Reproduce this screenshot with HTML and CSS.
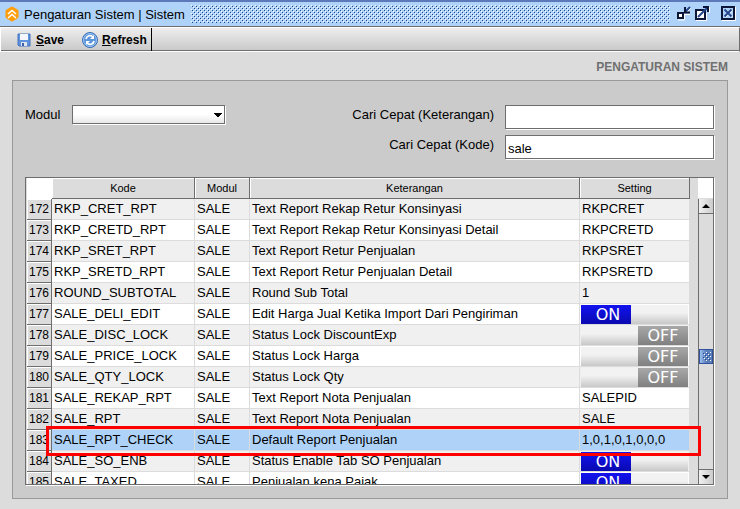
FILE: index.html
```
<!DOCTYPE html>
<html lang="id">
<head>
    <meta charset="UTF-8">
    <meta name="viewport" content="width=device-width, initial-scale=1.0">
    <title>Pengaturan Sistem | Sistem</title>
    <link rel="stylesheet" href="styles.css">
</head>
<body>
    <div class="window">
        <header class="titlebar">
            <svg class="app-icon" width="14" height="16" viewBox="0 0 14 16">
                <path d="M7 2l5 3v6l-5 3-5-3V5z" fill="#ff9d0a" stroke="#ff9d0a" stroke-width="3" stroke-linejoin="round"/>
                <path d="M3 8l4-3.500L11 8M3 12l4-3.500L11 12" fill="none" stroke="#fff" stroke-width="1.600"/>
            </svg>
            <h1>Pengaturan Sistem | Sistem</h1>
            <svg class="grip" aria-hidden="true">
                <defs>
                    <pattern id="dots" width="4" height="4" patternUnits="userSpaceOnUse">
                        <path d="M0 0h1v1H0zM2 2h1v1H2z" fill="#fff"/>
                        <path d="M1 1h1v1H1zM3 3h1v1H3z" fill="#24458c"/>
                    </pattern>
                </defs>
                <rect width="100%" height="100%" fill="url(#dots)"/>
            </svg>
            <div class="window-buttons">
                <button type="button" aria-label="Minimize">
                    <svg width="16" height="16" viewBox="0 0 16 16" fill="none">
                        <path d="M2 15h6.500V8.500M9 9.500h5M15 3l-4 4" stroke="#fff"/>
                        <path d="M2 8h5v5H2z" fill="#fff" stroke="#0c1638" stroke-width="2"/>
                        <path d="M14 2L9 7" stroke="#24458c" stroke-width="2"/>
                        <path d="M9 2v5.500M8 7.500h6" stroke="#0c1638" stroke-width="2"/>
                    </svg>
                </button>
                <button type="button" aria-label="Maximize">
                    <svg width="16" height="16" viewBox="0 0 16 16" fill="none">
                        <path d="M2 15.500h10.500V8M15.500 2v6" stroke="#fff"/>
                        <path d="M2 5h9v9H2z" fill="#fff" stroke="#0c1638" stroke-width="2"/>
                        <path d="M4 12l9-9" stroke="#24458c" stroke-width="2"/>
                        <path d="M9 2h5v5" stroke="#0c1638" stroke-width="2"/>
                    </svg>
                </button>
                <button type="button" class="close" aria-label="Close">
                    <svg width="16" height="16" viewBox="0 0 16 16" fill="none">
                        <path d="M2 15.500h13.500V2" stroke="#fff"/>
                        <path d="M2 2h12v12H2z" stroke="#0c1638" stroke-width="2"/>
                        <path d="M5 5l7 7M12 5l-7 7" stroke="#fff" stroke-width="2"/>
                        <path d="M4.500 4.500l7 7M11.500 4.500l-7 7" stroke="#24458c" stroke-width="2"/>
                    </svg>
                </button>
            </div>
        </header>

        <div class="toolbar">
            <button type="button">
                <svg width="16" height="16" viewBox="0 0 16 16">
                    <path d="M2 2h12v12H3l-1-1z" fill="#5f92dc" stroke="#4472bd"/>
                    <path d="M4 2h8v6H4z" fill="#f4f8fc"/>
                    <path d="M5 10h6v4H5z" fill="#dfe6ee"/>
                    <path d="M6 11h2v3H6z" fill="#3a62ac"/>
                </svg>
                <span><u>S</u>ave</span>
            </button>
            <button type="button">
                <svg width="16" height="16" viewBox="0 0 16 16">
                    <circle cx="8" cy="8" r="7.500" fill="#5a95dc" stroke="#3a6cb4"/>
                    <circle cx="8" cy="8" r="6.500" fill="none" stroke="#9cc4f0"/>
                    <path d="M4 7a4 4 0 0 1 7-2M12 9a4 4 0 0 1-7 2" fill="none" stroke="#fff" stroke-width="1.800"/>
                    <path d="M12 3v4H8zM4 13V9h4z" fill="#fff"/>
                </svg>
                <span><u>R</u>efresh</span>
            </button>
        </div>

        <main>
            <h2>PENGATURAN SISTEM</h2>
            <div class="panel">
                <form class="filters">
                    <div class="field">
                        <label for="modul">Modul</label>
                        <select id="modul"><option></option><option>SALE</option></select>
                    </div>
                    <div class="search">
                        <label for="cari-keterangan">Cari Cepat (Keterangan)</label>
                        <input type="text" id="cari-keterangan">
                        <label for="cari-kode">Cari Cepat (Kode)</label>
                        <input type="text" id="cari-kode" value="sale">
                    </div>
                </form>

                <div class="grid">
                    <table>
                        <colgroup>
                            <col class="col-no"><col class="col-kode"><col class="col-modul"><col><col class="col-setting">
                        </colgroup>
                        <thead>
                            <tr><td></td><th>Kode</th><th>Modul</th><th>Keterangan</th><th>Setting</th></tr>
                        </thead>
                        <tbody>
                            <tr><th>172</th><td>RKP_CRET_RPT</td><td>SALE</td><td>Text Report Rekap Retur Konsinyasi</td><td>RKPCRET</td></tr>
                            <tr><th>173</th><td>RKP_CRETD_RPT</td><td>SALE</td><td>Text Report Rekap Retur Konsinyasi Detail</td><td>RKPCRETD</td></tr>
                            <tr><th>174</th><td>RKP_SRET_RPT</td><td>SALE</td><td>Text Report Retur Penjualan</td><td>RKPSRET</td></tr>
                            <tr><th>175</th><td>RKP_SRETD_RPT</td><td>SALE</td><td>Text Report Retur Penjualan Detail</td><td>RKPSRETD</td></tr>
                            <tr><th>176</th><td>ROUND_SUBTOTAL</td><td>SALE</td><td>Round Sub Total</td><td>1</td></tr>
                            <tr><th>177</th><td>SALE_DELI_EDIT</td><td>SALE</td><td>Edit Harga Jual Ketika Import Dari Pengiriman</td><td class="switch"><label class="toggle"><input type="checkbox" checked><span>ON</span></label></td></tr>
                            <tr><th>178</th><td>SALE_DISC_LOCK</td><td>SALE</td><td>Status Lock DiscountExp</td><td class="switch"><label class="toggle"><input type="checkbox"><span>OFF</span></label></td></tr>
                            <tr><th>179</th><td>SALE_PRICE_LOCK</td><td>SALE</td><td>Status Lock Harga</td><td class="switch"><label class="toggle"><input type="checkbox"><span>OFF</span></label></td></tr>
                            <tr><th>180</th><td>SALE_QTY_LOCK</td><td>SALE</td><td>Status Lock Qty</td><td class="switch"><label class="toggle"><input type="checkbox"><span>OFF</span></label></td></tr>
                            <tr><th>181</th><td>SALE_REKAP_RPT</td><td>SALE</td><td>Text Report Nota Penjualan</td><td>SALEPID</td></tr>
                            <tr><th>182</th><td>SALE_RPT</td><td>SALE</td><td>Text Report Nota Penjualan</td><td>SALE</td></tr>
                            <tr class="selected"><th>183</th><td>SALE_RPT_CHECK</td><td>SALE</td><td>Default Report Penjualan</td><td>1,0,1,0,1,0,0,0</td></tr>
                            <tr><th>184</th><td>SALE_SO_ENB</td><td>SALE</td><td>Status Enable Tab SO Penjualan</td><td class="switch"><label class="toggle"><input type="checkbox" checked><span>ON</span></label></td></tr>
                            <tr><th>185</th><td>SALE_TAXED</td><td>SALE</td><td>Penjualan kena Pajak</td><td class="switch"><label class="toggle"><input type="checkbox" checked><span>ON</span></label></td></tr>
                        </tbody>
                    </table>
                    <div class="scrollbar">
                        <button type="button" aria-label="Scroll up"><svg width="8" height="4" viewBox="0 0 8 4"><path d="M0 4l4-4 4 4z"/></svg></button>
                        <div class="track">
                            <svg class="thumb" width="14" height="15"><rect x="3" y="2" width="8" height="9" fill="url(#dots)"/></svg>
                        </div>
                        <button type="button" aria-label="Scroll down"><svg width="8" height="4" viewBox="0 0 8 4"><path d="M0 0h8L4 4z"/></svg></button>
                    </div>
                </div>
            </div>
        </main>
    </div>
</body>
</html>
```

FILE: styles.css
```
:root {
    --blue: #afd3f8;
    --line: #6e6e6e;
    --panel: #cbcbcb;
    --face: #dcdcdc;
}

* {
    box-sizing: border-box;
}

body {
    margin: 0;
    font-family: "Liberation Sans", Arial, sans-serif;
    font-size: 13px;
    color: #000;
    background: var(--face);
}

button {
    padding: 0;
    border: none;
    background: none;
    font: inherit;
    color: inherit;
}

svg {
    display: block;
}

.window {
    display: flex;
    flex-direction: column;
    height: 100vh;
}

/* title bar */
.titlebar {
    display: flex;
    align-items: center;
    height: 27px;
    padding: 0 4px 0 5px;
    background: var(--blue);
    border-top: 2px solid #5c78b8;
    border-bottom: 1px solid var(--line);
}

.titlebar h1 {
    margin: 0 6px 0 5px;
    font-size: 13px;
    font-weight: normal;
}

.grip {
    flex: 1;
    min-width: 0;
    height: 18px;
}

.window-buttons {
    display: flex;
    gap: 2px;
    padding: 0 0 2px 6px;
}

.window-buttons .close {
    margin-left: 8px;
}

/* toolbar */
.toolbar {
    display: flex;
    height: 25px;
    padding: 0 1px;
    background: linear-gradient(#eee, #c8c8c8);
    border: 1px solid #fff;
    border-right-color: var(--line);
    box-shadow: inset 0 -1px var(--line);
}

.toolbar button {
    display: flex;
    align-items: center;
    gap: 4px;
    padding: 0 4px 0 14px;
    font-size: 12px;
    font-weight: bold;
}

.toolbar button:last-child {
    border-right: 1px solid #000;
}

main {
    flex: 1;
    display: flex;
    flex-direction: column;
    min-height: 0;
    padding: 7px 12px 10px;
}

h2 {
    margin: 0 0 5px;
    font-size: 12px;
    line-height: 16px;
    text-align: right;
    color: #707070;
}

.panel {
    flex: 1;
    display: flex;
    flex-direction: column;
    gap: 18px;
    min-height: 0;
    padding: 24px 13px 13px 12px;
    background: var(--panel);
    border: 1px solid #999;
}

/* filters */
.filters {
    display: flex;
    justify-content: space-between;
    align-items: flex-start;
}

.field {
    display: flex;
    align-items: center;
    gap: 12px;
}

.search {
    display: grid;
    grid-template-columns: auto 209px;
    gap: 6px 11px;
    text-align: right;
}

.search label {
    line-height: 20px;
}

select {
    appearance: none;
    width: 153px;
    height: 19px;
    border: 1px solid var(--line);
    border-radius: 0;
    box-shadow: 1px 1px #fff;
    background:
        linear-gradient(to bottom right, #000 55%, transparent 55%) right 2px center / 4px 4px no-repeat,
        linear-gradient(to bottom left, #000 55%, transparent 55%) right 6px center / 4px 4px no-repeat,
        linear-gradient(#fff 50%, #e8e8e8);
}

.search input {
    width: 100%;
    height: 24px;
    padding: 2px 2px 0;
    border: 1px solid var(--line);
    box-shadow: 1px 1px #fff;
    background: #fff;
    font: inherit;
}

/* settings grid */
.grid {
    flex: 1;
    display: flex;
    min-height: 0;
    overflow: hidden;
    background: var(--face);
    border: 1px solid var(--line);
    box-shadow: 1px 1px #fff;
    padding-left: 1px;
}

table {
    flex: 1;
    align-self: flex-start;
    margin-right: 8px;
    table-layout: fixed;
    border-collapse: separate;
    border-spacing: 0;
    white-space: nowrap;
}

.col-no {
    width: 25px;
}

.col-kode {
    width: 143px;
}

.col-modul {
    width: 55px;
}

.col-setting {
    width: 110px;
}

th, td {
    height: 21px;
    padding: 0 0 0 2px;
    line-height: 20px;
    text-align: left;
    border-right: 1px solid var(--face);
    border-bottom: 1px solid var(--face);
}

th {
    padding: 0;
    font-size: 11px;
    font-weight: normal;
    text-align: center;
    background: var(--face);
    border-color: var(--line);
    box-shadow: inset 1px 1px #fff;
}

thead td {
    background: #fff;
    border-color: #fff;
}

tbody th {
    padding-right: 2px;
    font-size: 12px;
    text-align: right;
}

tbody td {
    background: #fff;
}

tbody tr:nth-child(odd) td {
    background: #f0f0f0;
}

tbody .selected {
    position: relative;
}

tbody .selected td {
    background: var(--blue);
}

/* red frame around the active setting */
.selected::after {
    content: "";
    position: absolute;
    inset: -4px -11px -5px 19px;
    z-index: 1;
    border: 3px solid #f00;
}

td.switch {
    padding: 0;
}

.toggle {
    position: relative;
    display: flex;
    justify-content: flex-end;
    height: 19px;
    margin: 0 1px;
    background: linear-gradient(#f2f2f2 40%, #c8c8c8);
    font-family: "DejaVu Sans", sans-serif;
    font-size: 16px;
    line-height: 19px;
    color: #fff;
}

.toggle input {
    position: absolute;
    inset: 0;
    margin: 0;
    opacity: 0;
}

.toggle span {
    width: 50px;
    text-align: center;
    background: linear-gradient(#a8a8a8, #808080);
}

.toggle:has(:checked) {
    justify-content: flex-start;
}

.toggle :checked + span {
    padding-left: 4px;
    background: linear-gradient(#1212f0, #0a0ab0);
}

/* scrollbar */
.scrollbar {
    display: flex;
    flex-direction: column;
    width: 15px;
    background: linear-gradient(#fff, #fff) 0 0 / 100% 20px no-repeat;
    padding-top: 21px;
}

.scrollbar > * {
    border-left: 1px solid var(--line);
}

.scrollbar button {
    display: grid;
    place-items: center;
    height: 15px;
    background: linear-gradient(90deg, #f0f0f0, #ccc);
    border-bottom: 1px solid var(--line);
}

.scrollbar button:last-child {
    border-top: 1px solid var(--line);
    border-bottom: none;
}

.track {
    flex: 1;
    display: grid;
    grid-template-rows: 53fr 15px 41fr;
}

.thumb {
    grid-row: 2;
    background: linear-gradient(90deg, #9cc2ee, #5a7dbc 50%);
    border: 1px solid #31519c;
}
```
